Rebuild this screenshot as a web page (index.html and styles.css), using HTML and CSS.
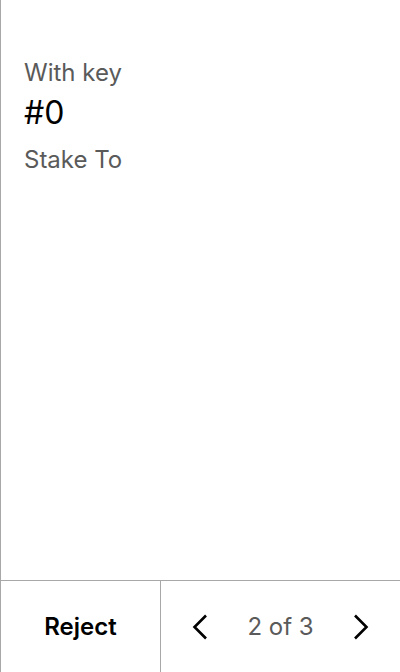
FILE: index.html
```html
<!DOCTYPE html>
<html>
<head>
<meta charset="utf-8">
<link rel="stylesheet" href="styles.css">
</head>
<body>
<div class="screen">
  <main class="content">
    <div class="label">With key</div>
    <div class="value">#0</div>
    <div class="label sub">Stake To</div>
  </main>
  <footer class="footer">
    <button class="reject">Reject</button>
    <div class="pager">
      <svg class="chev" width="16" height="26" viewBox="0 0 16 26"><path d="M14 1.5 L2.5 13 L14 24.5" fill="none" stroke="#000" stroke-width="2.6"/></svg>
      <span class="count">2 of 3</span>
      <svg class="chev" width="16" height="26" viewBox="0 0 16 26"><path d="M2 1.5 L13.5 13 L2 24.5" fill="none" stroke="#000" stroke-width="2.6"/></svg>
    </div>
  </footer>
</div>
</body>
</html>
```

FILE: styles.css
```css
html, body {
  margin: 0;
  padding: 0;
  background: #fff;
}
.screen {
  width: 400px;
  height: 672px;
  box-sizing: border-box;
  border-left: 1px solid #a8a8a8;
  display: flex;
  flex-direction: column;
  font-family: Inter, "Noto Sans", sans-serif;
}
.content {
  flex: 1;
  padding: 57px 0 0 23px;
}
.label {
  font-size: 24px;
  line-height: 32px;
  color: #5a5a5a;
}
.value {
  font-size: 32px;
  line-height: 40px;
  color: #000;
  margin: 4px 0 11px;
}
.footer {
  height: 91px;
  border-top: 1px solid #a8a8a8;
  display: flex;
}
.reject {
  width: 160px;
  border: none;
  border-right: 1px solid #a8a8a8;
  background: #fff;
  font-family: Inter, "Noto Sans", sans-serif;
  font-size: 24px;
  font-weight: 600;
  color: #000;
  padding: 0;
}
.pager {
  flex: 1;
  display: flex;
  align-items: center;
  justify-content: space-between;
  padding: 0 31px 0 31px;
}
.count {
  font-size: 24px;
  color: #5a5a5a;
}
.chev {
  display: block;
}
```
